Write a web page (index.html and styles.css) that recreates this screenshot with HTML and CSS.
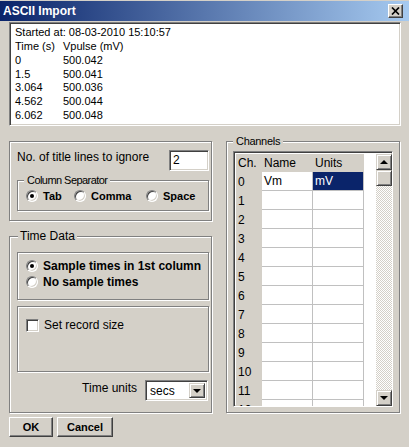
FILE: index.html
```html
<!DOCTYPE html>
<html>
<head>
<meta charset="utf-8">
<title>ASCII Import</title>
<link rel="stylesheet" href="styles.css">
</head>
<body>
<div class="dialog">
  <div class="titlebar">
    <span class="title">ASCII Import</span>
    <span class="close"><svg width="9" height="8" viewBox="0 0 9 8"><path d="M1 0.5 L8 7.5 M8 0.5 L1 7.5" stroke="#000" stroke-width="1.7" fill="none"/></svg></span>
  </div>

  <div class="log">
    <div class="line">Started at: 08-03-2010 15:10:57</div>
    <div class="line"><span class="c1">Time (s)</span><span>Vpulse (mV)</span></div>
    <div class="line"><span class="c1">0</span><span>500.042</span></div>
    <div class="line"><span class="c1">1.5</span><span>500.041</span></div>
    <div class="line"><span class="c1">3.064</span><span>500.036</span></div>
    <div class="line"><span class="c1">4.562</span><span>500.044</span></div>
    <div class="line"><span class="c1">6.062</span><span>500.048</span></div>
  </div>

  <div class="main">
    <div class="left">
      <div class="etched box1">
        <div class="ignore-row">
          <span class="ignore-label">No. of title lines to ignore</span>
          <span class="field">2</span>
        </div>
        <fieldset class="etched sep">
          <legend class="sep-legend">Column Separator</legend>
          <div class="sep-radios">
            <span class="opt opt-tab"><span class="radio on"></span><b>Tab</b></span>
            <span class="opt opt-comma"><span class="radio"></span><b>Comma</b></span>
            <span class="opt"><span class="radio"></span><b>Space</b></span>
          </div>
        </fieldset>
      </div>

      <fieldset class="etched timedata">
        <legend class="td-legend">Time Data</legend>
        <div class="etched inner1">
          <div class="opt big"><span class="radio on"></span><b>Sample times in 1st column</b></div>
          <div class="opt big"><span class="radio"></span><b>No sample times</b></div>
        </div>
        <div class="etched inner2">
          <div class="opt check-row"><span class="checkbox"></span><span>Set record size</span></div>
        </div>
        <div class="units-row">
          <span class="units-label">Time units</span>
          <span class="select"><span class="select-text">secs</span><span class="sbtn"><span class="arrow-down"></span></span></span>
        </div>
      </fieldset>
    </div>

    <fieldset class="etched channels">
      <legend class="ch-legend">Channels</legend>
      <div class="grid">
        <table class="cells">
          <colgroup><col class="w-ch"><col class="w-name"><col class="w-units"><col class="w-fill"></colgroup>
          <thead>
            <tr><th>Ch.</th><th>Name</th><th>Units</th><th class="fill"></th></tr>
          </thead>
          <tbody>
            <tr><td class="ch">0</td><td class="cell">Vm</td><td class="cell sel">mV</td><td class="fill"></td></tr>
            <tr><td class="ch">1</td><td class="cell"></td><td class="cell"></td><td class="fill"></td></tr>
            <tr><td class="ch">2</td><td class="cell"></td><td class="cell"></td><td class="fill"></td></tr>
            <tr><td class="ch">3</td><td class="cell"></td><td class="cell"></td><td class="fill"></td></tr>
            <tr><td class="ch">4</td><td class="cell"></td><td class="cell"></td><td class="fill"></td></tr>
            <tr><td class="ch">5</td><td class="cell"></td><td class="cell"></td><td class="fill"></td></tr>
            <tr><td class="ch">6</td><td class="cell"></td><td class="cell"></td><td class="fill"></td></tr>
            <tr><td class="ch">7</td><td class="cell"></td><td class="cell"></td><td class="fill"></td></tr>
            <tr><td class="ch">8</td><td class="cell"></td><td class="cell"></td><td class="fill"></td></tr>
            <tr><td class="ch">9</td><td class="cell"></td><td class="cell"></td><td class="fill"></td></tr>
            <tr><td class="ch">10</td><td class="cell"></td><td class="cell"></td><td class="fill"></td></tr>
            <tr><td class="ch">11</td><td class="cell"></td><td class="cell"></td><td class="fill"></td></tr>
            <tr><td class="ch">12</td><td class="cell"></td><td class="cell"></td><td class="fill"></td></tr>
          </tbody>
        </table>
        <div class="scroll">
          <span class="sbtn sq"><span class="arrow-up"></span></span>
          <span class="sbtn sq"></span>
          <span class="track"></span>
          <span class="sbtn sq"><span class="arrow-down"></span></span>
        </div>
      </div>
    </fieldset>
  </div>

  <div class="buttons">
    <span class="btn btn-ok">OK</span>
    <span class="btn btn-cancel">Cancel</span>
  </div>
</div>
</body>
</html>
```

FILE: styles.css
```css
* { box-sizing: border-box; }
html, body { margin: 0; padding: 0; }
body {
  width: 409px;
  height: 447px;
  overflow: hidden;
  background: #d4d0c8;
  font-family: "Liberation Sans", Arial, sans-serif;
  font-size: 12px;
  color: #000;
}
.dialog { width: 409px; height: 447px; padding-top: 1px; }

/* title bar */
.titlebar {
  height: 20px;
  background: linear-gradient(to right, #0a246a, #a6caf0);
  display: flex;
  align-items: center;
  justify-content: space-between;
  padding: 0 6px 0 3px;
}
.title { color: #fff; font-weight: bold; font-size: 12px; line-height: 20px; }
.close {
  width: 15px; height: 14px;
  background: #d4d0c8;
  border: 1px solid;
  border-color: #fff #404040 #404040 #fff;
  box-shadow: inset -1px -1px #808080;
  display: flex; align-items: center; justify-content: center;
}
.close svg { display: block; }

/* sunken helpers */
.log, .field, .select, .grid {
  border: 1px solid;
  border-color: #808080 #fff #fff #808080;
  box-shadow: inset 1px 1px #404040, inset -1px -1px #d4d0c8;
  background: #fff;
}

.log {
  margin: 1px 8px 0 9px;
  height: 104px;
  padding: 3px 0 0 5px;
  font-size: 11px;
  line-height: 13.85px;
}
.line { display: flex; white-space: nowrap; }
.c1 { width: 48px; }

/* etched group boxes */
.etched {
  border: 1px solid #808080;
  box-shadow: inset 1px 1px #fff, 1px 1px #fff;
  margin: 0;
  min-width: 0;
}
legend { background: #d4d0c8; line-height: 14px; }

.main { display: flex; align-items: flex-start; margin: 8px 0 0 9px; }
.left { width: 203px; }

.box1 { margin-top: 7px; height: 80px; padding: 8px 2px 0 7px; }
.ignore-row { display: flex; justify-content: space-between; align-items: flex-start; }
.ignore-label { margin-top: 0; line-height: 14px; }
.field {
  width: 40px; height: 21px;
  padding: 2px 0 0 3px;
  font-size: 12px; line-height: 15px;
}

.sep { margin-top: 3px; width: 192px; padding: 2px 0 7px 8px; }
.sep-legend { margin-left: -2px; padding: 0 3px; font-size: 11px; letter-spacing: -0.55px; line-height: 13px; }
.sep-radios { display: flex; align-items: center; height: 14px; }
.opt { display: flex; align-items: center; white-space: nowrap; }
.opt b { font-size: 11px; margin-left: 5px; }
.opt-tab { width: 48px; }
.opt-comma { width: 72px; }

.radio {
  width: 12px; height: 12px;
  border-radius: 50%;
  background: #fff;
  border: 1px solid;
  border-color: #808080 #fff #fff #808080;
  box-shadow: inset 1px 1px #404040, inset -1px -1px #d4d0c8;
  display: inline-flex; align-items: center; justify-content: center;
  flex: none;
}
.radio.on::after {
  content: "";
  width: 4px; height: 4px;
  border-radius: 50%;
  background: #000;
}
.checkbox {
  width: 13px; height: 13px;
  background: #fff;
  border: 1px solid;
  border-color: #808080 #fff #fff #808080;
  box-shadow: inset 1px 1px #404040, inset -1px -1px #d4d0c8;
  flex: none;
}

.timedata { margin-top: 8px; width: 203px; padding: 9px 2px 11px 7px; }
.td-legend { margin-left: 1px; padding: 0 2px; font-size: 12px; }
.inner1 { width: 192px; height: 48px; padding: 5px 0 0 8px; }
.opt.big { height: 16px; }
.opt.big b { font-size: 12px; }
.inner2 { width: 192px; height: 66px; margin-top: 6px; padding: 11px 0 0 8px; }
.check-row span + span { margin-left: 5px; line-height: 14px; }
.units-row { display: flex; justify-content: flex-end; align-items: flex-start; margin-top: 8px; padding-right: 1px; }
.units-label { margin: 1px 8px 0 0; line-height: 14px; }
.select {
  width: 63px; height: 21px;
  display: flex; align-items: stretch;
  padding: 2px;
}
.select-text { flex: 1; padding-left: 2px; line-height: 17px; font-size: 12px; }

/* raised button pieces */
.sbtn {
  width: 16px;
  background: #d4d0c8;
  border: 1px solid;
  border-color: #d4d0c8 #404040 #404040 #d4d0c8;
  box-shadow: inset 1px 1px #fff, inset -1px -1px #808080;
  display: flex; align-items: center; justify-content: center;
  flex: none;
}
.sbtn.sq { height: 16px; }
.arrow-down { width: 0; height: 0; border-left: 4px solid transparent; border-right: 4px solid transparent; border-top: 4px solid #000; }
.arrow-up { width: 0; height: 0; border-left: 4px solid transparent; border-right: 4px solid transparent; border-bottom: 4px solid #000; }

/* channels */
.channels { margin-left: 14px; width: 174px; height: 279px; padding: 3px 6px 0 6px; }
.ch-legend { margin-left: 0; padding: 0 3px; font-size: 11px; letter-spacing: -0.3px; }
.grid { width: 160px; height: 256px; padding: 2px; display: flex; overflow: hidden; }
.cells { table-layout: fixed; border-collapse: separate; border-spacing: 0; width: 140px; flex: none; align-self: flex-start; }
.w-ch { width: 26px; }
.w-name { width: 51px; }
.w-units { width: 51px; }
.w-fill { width: 12px; }
.cells th, .cells td { padding: 0 0 0 2px; text-align: left; font-weight: normal; font-size: 12px; white-space: nowrap; overflow: hidden; }
.cells th { height: 18px; line-height: 18px; background: #d4d0c8; }
.cells th.fill, .cells td.fill { background: #fff; }
.cells td { height: 19px; line-height: 18px; }
.cells td.ch { background: #d4d0c8; }
.cells td.cell { border-right: 1px solid #c0c0c0; border-bottom: 1px solid #c0c0c0; background: #fff; }
.cells td.sel { background: #0a246a; color: #fff; }
.scroll { width: 16px; height: 252px; display: flex; flex-direction: column; flex: none; }
.track { flex: 1; background: repeating-conic-gradient(#fff 0 25%, #d4d0c8 0 50%) 0 0 / 2px 2px; }

/* buttons */
.buttons { display: flex; margin: 4px 0 0 9px; }
.btn {
  height: 20px;
  font-weight: bold; font-size: 11px;
  display: flex; align-items: center; justify-content: center;
  border: 1px solid;
  border-color: #fff #404040 #404040 #fff;
  box-shadow: inset -1px -1px #808080;
  background: #d4d0c8;
}
.btn-ok { width: 44px; }
.btn-cancel { width: 56px; margin-left: 4px; }
```
